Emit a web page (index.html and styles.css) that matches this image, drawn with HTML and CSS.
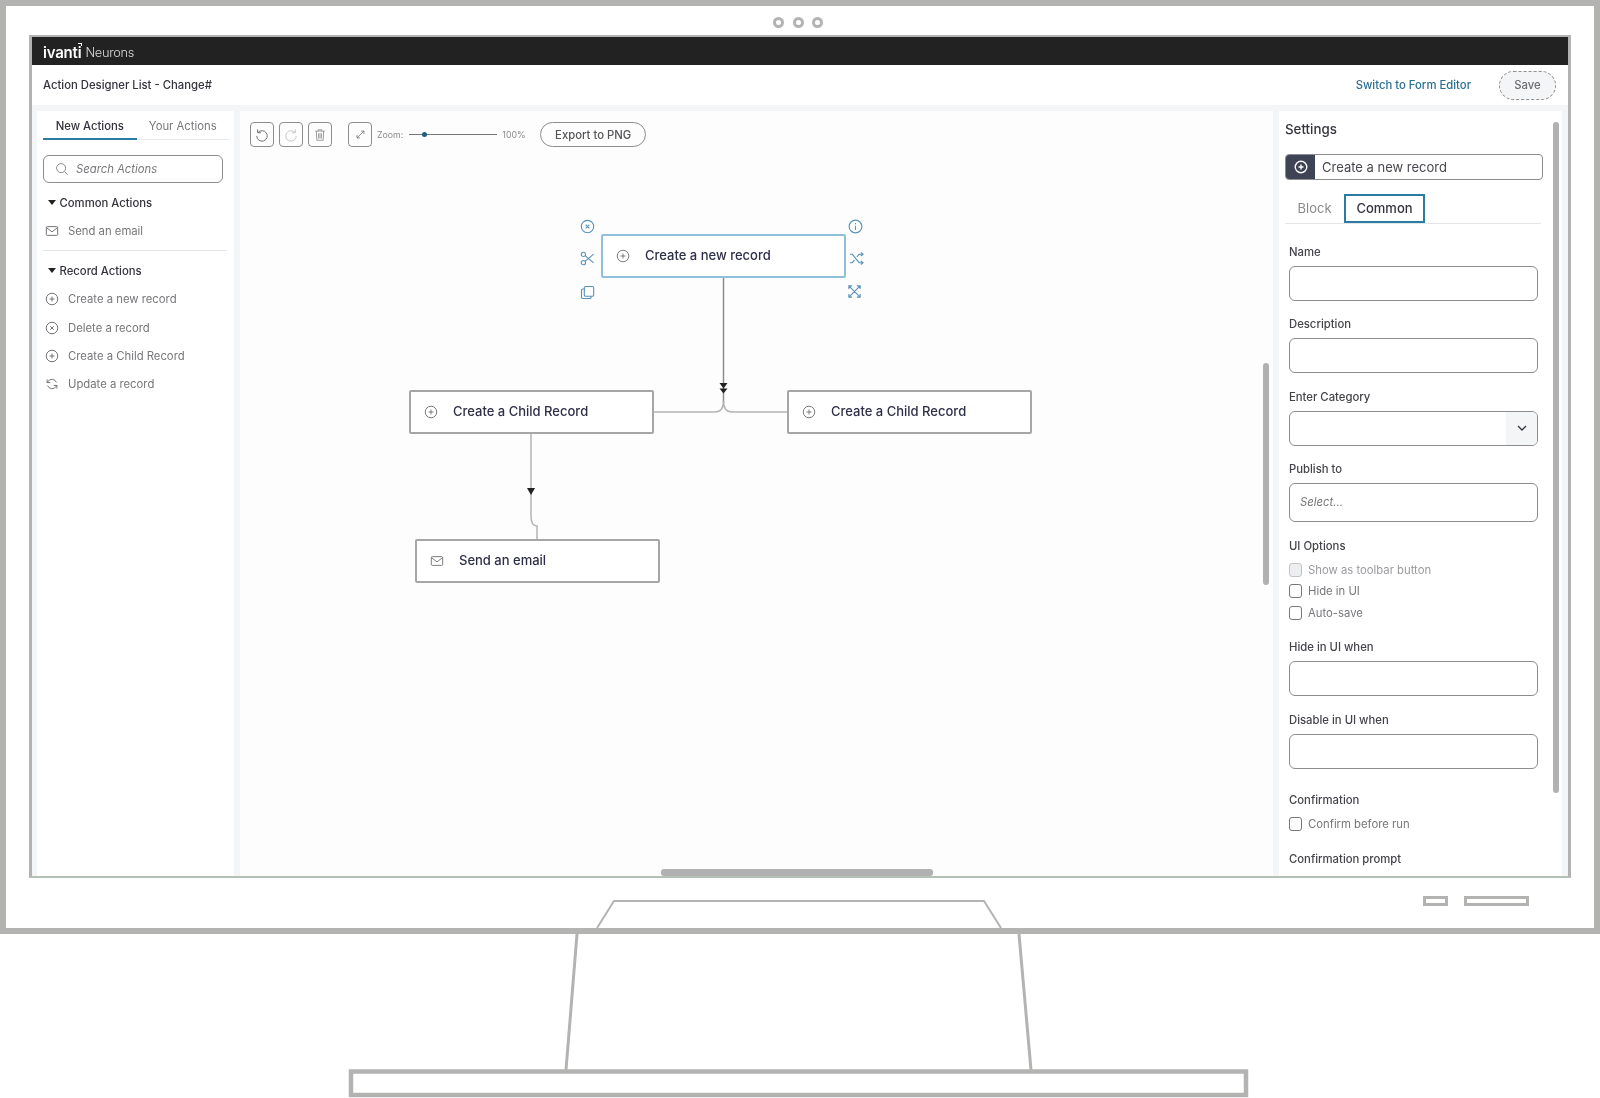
FILE: index.html
```html
<!DOCTYPE html>
<html lang="en">

<head>
    <meta charset="UTF-8">
    <title>Action Designer List - Change#</title>
    <link rel="stylesheet" href="styles.css">
</head>

<body>
    <svg class="icon-defs" width="0" height="0">
        <symbol id="i-plus" viewBox="0 0 16 16"><circle cx="8" cy="8" r="6.6"/><path d="M8 5.2v5.6M5.2 8h5.6"/></symbol>
        <symbol id="i-cross" viewBox="0 0 16 16"><circle cx="8" cy="8" r="6.6"/><path d="M6 6l4 4M10 6l-4 4"/></symbol>
        <symbol id="i-mail" viewBox="0 0 16 16"><rect x="1.5" y="3" width="13" height="10" rx="1.2"/><path d="M1.8 4.2L8 9l6.2-4.8"/></symbol>
        <symbol id="i-sync" viewBox="0 0 16 16"><path d="M13 6.2A5.4 5.4 0 0 0 3.6 4.8L2.4 6.4M3 9.8a5.4 5.4 0 0 0 9.4 1.4l1.2-1.6"/><path d="M2.4 2.8v3.6H6M13.6 13.2V9.6H10"/></symbol>
        <symbol id="i-search" viewBox="0 0 16 16"><circle cx="7" cy="7" r="5.2"/><path d="M11 11l3.6 3.6"/></symbol>
        <symbol id="i-undo" viewBox="0 0 16 16"><path d="M3.4 5.2A6 6 0 1 1 2 9"/><path d="M3 1.6v3.8h3.8"/></symbol>
        <symbol id="i-redo" viewBox="0 0 16 16"><path d="M12.6 5.2A6 6 0 1 0 14 9"/><path d="M13 1.6v3.8H9.2"/></symbol>
        <symbol id="i-trash" viewBox="0 0 16 16"><path d="M2.5 3.5h11M6 3.5V2h4v1.5M3.8 3.5l.6 10.5h7.2l.6-10.5M6.4 6v6M8 6v6M9.6 6v6"/></symbol>
        <symbol id="i-fit" viewBox="0 0 16 16"><path d="M3 13L13 3M8.8 3H13v4.2M7.2 13H3V8.8"/></symbol>
        <symbol id="i-scissors" viewBox="0 0 16 16"><circle cx="3.6" cy="3.6" r="2.3"/><circle cx="3.6" cy="12.4" r="2.3"/><path d="M5.4 5l9.1 7.6M5.4 11l9.1-7.6"/></symbol>
        <symbol id="i-copy" viewBox="0 0 16 16"><rect x="4.6" y="1.6" width="10" height="10.4" rx="1.4"/><path d="M4.6 4.2H3A1.4 1.4 0 0 0 1.6 5.6v7.4A1.4 1.4 0 0 0 3 14.4h7.4a1.4 1.4 0 0 0 1.4-1.4v-1"/></symbol>
        <symbol id="i-info" viewBox="0 0 16 16"><circle cx="8" cy="8" r="6.8"/><path d="M8 7.2v4.4M8 4.2v1.4"/></symbol>
        <symbol id="i-shuffle" viewBox="0 0 16 16"><path d="M1 3.5h2.6L10.8 12.5H14M1 12.5h2.6l2.2-2.8M8.4 6.2l2.4-2.7H14"/><path d="M12.6 1.6L15 3.5l-2.4 1.9M12.6 10.6l2.4 1.9-2.4 1.9"/></symbol>
        <symbol id="i-expand" viewBox="0 0 16 16"><path d="M2 2l12 12M14 2L2 14M2 5.4V2h3.4M10.6 2H14v3.4M14 10.6V14h-3.4M5.4 14H2v-3.4"/></symbol>
    </svg>

    <div class="monitor">
        <div class="camera-dots">
            <span class="dot"></span>
            <span class="dot"></span>
            <span class="dot"></span>
        </div>

        <div class="screen">
            <header class="topbar">
                <span class="logo">ivanti<span class="logo-mark"></span></span>
                <span class="logo-product">Neurons</span>
            </header>

            <div class="subbar">
                <div class="page-title">Action Designer List - Change#</div>
                <div class="subbar-actions">
                    <a class="switch-link">Switch to Form Editor</a>
                    <div class="save-button">Save</div>
                </div>
            </div>

            <div class="workspace">
                <aside class="actions-panel">
                    <div class="panel-tabs">
                        <div class="panel-tab active">New Actions</div>
                        <div class="panel-tab">Your Actions</div>
                    </div>
                    <div class="search-box">
                        <svg class="icon search-icon"><use href="#i-search"/></svg>
                        <span>Search Actions</span>
                    </div>

                    <div class="group-title"><span class="caret"></span>Common Actions</div>
                    <div class="action-item"><svg class="icon"><use href="#i-mail"/></svg>Send an email</div>
                    <div class="group-divider"></div>

                    <div class="group-title"><span class="caret"></span>Record Actions</div>
                    <div class="action-item"><svg class="icon"><use href="#i-plus"/></svg>Create a new record</div>
                    <div class="action-item"><svg class="icon"><use href="#i-cross"/></svg>Delete a record</div>
                    <div class="action-item"><svg class="icon"><use href="#i-plus"/></svg>Create a Child Record</div>
                    <div class="action-item"><svg class="icon"><use href="#i-sync"/></svg>Update a record</div>
                </aside>

                <main class="canvas">
                    <div class="toolbar">
                        <div class="tool-group">
                            <div class="tool-button"><svg class="icon"><use href="#i-undo"/></svg></div>
                            <div class="tool-button disabled"><svg class="icon"><use href="#i-redo"/></svg></div>
                            <div class="tool-button muted"><svg class="icon"><use href="#i-trash"/></svg></div>
                        </div>
                        <div class="tool-button fit-button"><svg class="icon"><use href="#i-fit"/></svg></div>
                        <span class="zoom-label">Zoom:</span>
                        <div class="zoom-slider"><span class="zoom-thumb"></span></div>
                        <span class="zoom-label">100%</span>
                        <div class="export-button">Export to PNG</div>
                    </div>

                    <svg class="connectors" width="1033" height="765">
                        <path class="line-dark" d="M483.5 166V292"/>
                        <path class="line" d="M413 301H475Q483.5 301 483.5 290M547 301H492Q483.5 301 483.5 290"/>
                        <path class="arrow" d="M479.5 272h8l-4 5.5 4 0-4 5-4-5 4 0z"/>
                        <path class="line" d="M291 322V405Q291 415 297 415V428"/>
                        <path class="arrow" d="M287 377h8l-4 7z"/>
                    </svg>

                    <div class="node node-start selected">
                        <svg class="icon"><use href="#i-plus"/></svg>
                        <span>Create a new record</span>
                    </div>
                    <div class="node node-left">
                        <svg class="icon"><use href="#i-plus"/></svg>
                        <span>Create a Child Record</span>
                    </div>
                    <div class="node node-right">
                        <svg class="icon"><use href="#i-plus"/></svg>
                        <span>Create a Child Record</span>
                    </div>
                    <div class="node node-mail">
                        <svg class="icon"><use href="#i-mail"/></svg>
                        <span>Send an email</span>
                    </div>

                    <svg class="handle h-close"><use href="#i-cross"/></svg>
                    <svg class="handle h-cut"><use href="#i-scissors"/></svg>
                    <svg class="handle h-copy"><use href="#i-copy"/></svg>
                    <svg class="handle h-info"><use href="#i-info"/></svg>
                    <svg class="handle h-shuffle"><use href="#i-shuffle"/></svg>
                    <svg class="handle h-expand"><use href="#i-expand"/></svg>

                    <span class="scroll-thumb canvas-scroll-y"></span>
                    <span class="scroll-thumb canvas-scroll-x"></span>
                </main>

                <aside class="settings-panel">
                    <div class="settings-title">Settings</div>
                    <div class="block-name">
                        <span class="block-icon"><svg class="icon"><use href="#i-plus"/></svg></span>
                        <span class="block-text">Create a new record</span>
                    </div>
                    <div class="settings-tabs">
                        <div class="settings-tab">Block</div>
                        <div class="settings-tab active">Common</div>
                    </div>

                    <div class="settings-form">
                        <div class="field">
                            <div class="field-label">Name</div>
                            <div class="input"></div>
                        </div>
                        <div class="field">
                            <div class="field-label">Description</div>
                            <div class="input"></div>
                        </div>
                        <div class="field">
                            <div class="field-label">Enter Category</div>
                            <div class="input select">
                                <span class="select-arrow">
                                    <svg width="12" height="12" viewBox="0 0 12 12"><path d="M2 4l4 4 4-4"/></svg>
                                </span>
                            </div>
                        </div>
                        <div class="field">
                            <div class="field-label">Publish to</div>
                            <div class="input tall">Select...</div>
                        </div>
                        <div class="field">
                            <div class="field-label">UI Options</div>
                            <div class="checks">
                                <div class="check disabled"><span class="box"></span>Show as toolbar button</div>
                                <div class="check"><span class="box"></span>Hide in UI</div>
                                <div class="check"><span class="box"></span>Auto-save</div>
                            </div>
                        </div>
                        <div class="field">
                            <div class="field-label">Hide in UI when</div>
                            <div class="input"></div>
                        </div>
                        <div class="field spaced">
                            <div class="field-label">Disable in UI when</div>
                            <div class="input"></div>
                        </div>
                        <div class="field">
                            <div class="field-label">Confirmation</div>
                            <div class="checks confirm">
                                <div class="check"><span class="box"></span>Confirm before run</div>
                            </div>
                        </div>
                        <div class="field">
                            <div class="field-label">Confirmation prompt</div>
                        </div>
                    </div>

                    <span class="scroll-thumb settings-scroll"></span>
                </aside>
            </div>
        </div>

        <div class="chin">
            <svg class="neck-top" width="414" height="50"><path d="M5 50L22 23H392L409 50"/></svg>
            <span class="chin-button small"></span>
            <span class="chin-button wide"></span>
        </div>
    </div>

    <svg class="stand" width="1600" height="164">
        <path d="M577 0L566 136M1019 0L1031 136"/>
        <rect x="351" y="137.5" width="895" height="23.5"/>
    </svg>
</body>

</html>
```

FILE: styles.css
```css
:root {
    --frame-color: #b3b4b2;
    --panel-bg: #f3f5f6;
    --input-border: #8d8d8f;
    --blue: #2a7ca3;
    --dark-text: #33333d;
    --gray-text: #77777b;
}

* {
    margin: 0;
    padding: 0;
    box-sizing: border-box;
    font-family: Inter, 'Liberation Sans', sans-serif;
}

body {
    width: 1600px;
    height: 1098px;
    background: white;
    overflow: hidden;
    font-size: 11.3px;
    color: var(--dark-text);
}

.icon-defs {
    position: absolute;
}

.icon {
    width: 14px;
    height: 14px;
    flex: none;
    fill: none;
    stroke: currentColor;
    stroke-width: 1.1;
}

/* monitor frame */
.monitor {
    width: 1600px;
    height: 934px;
    border: 6px solid var(--frame-color);
    filter: blur(0.35px);
}

.camera-dots {
    height: 29px;
    display: flex;
    justify-content: center;
    align-items: center;
    gap: 8.5px;
    padding-right: 4px;
    padding-top: 3px;
}

.dot {
    width: 11px;
    height: 11px;
    border: 3px solid var(--frame-color);
    border-radius: 50%;
}

.screen {
    margin: 0 23px;
    height: 843px;
    display: flex;
    flex-direction: column;
    border: 3px solid var(--frame-color);
    border-top-width: 2px;
    border-bottom: 2px solid #b4bfb6;
}

.chin {
    position: relative;
    height: 50px;
    display: flex;
    justify-content: flex-end;
    gap: 16px;
    padding: 18px 65px 0 0;
}

.chin-button {
    height: 10px;
    border: 3px solid var(--frame-color);
}

.chin-button.small {
    width: 25px;
}

.chin-button.wide {
    width: 65px;
}

.neck-top {
    position: absolute;
    left: 586px;
    top: 0;
    fill: none;
    stroke: var(--frame-color);
    stroke-width: 2;
}

.stand {
    display: block;
    fill: none;
    stroke: var(--frame-color);
    stroke-width: 3;
    filter: blur(0.35px);
}

.stand rect {
    stroke-width: 4.5;
}

/* top bars */
.topbar {
    height: 28px;
    flex: none;
    display: flex;
    align-items: center;
    background: #222222;
    color: white;
    padding: 2px 0 0 11px;
}

.logo {
    position: relative;
    font-size: 15px;
    font-weight: 600;
    letter-spacing: -0.2px;
}

.logo-mark {
    position: absolute;
    right: -1px;
    top: 0;
    width: 4px;
    height: 3px;
    border-top: 1px solid white;
    border-right: 1px solid white;
}

.logo-product {
    margin-left: 4px;
    font-size: 12.8px;
    font-weight: 300;
    letter-spacing: -0.3px;
    color: #d8d8d8;
}

.subbar {
    height: 40px;
    flex: none;
    display: flex;
    justify-content: space-between;
    align-items: center;
    background: white;
    padding: 0 12px 0 11px;
}

.page-title {
    font-weight: 500;
    margin-top: -1px;
}

.subbar-actions {
    display: flex;
    align-items: center;
    gap: 28px;
}

.switch-link {
    color: #2a6f92;
    font-weight: 500;
}

.save-button {
    width: 57px;
    height: 29px;
    display: flex;
    justify-content: center;
    align-items: center;
    border: 1px dashed #8f8f8f;
    border-radius: 15px;
    background: var(--panel-bg);
    color: #6b6b70;
    font-weight: 500;
}

.workspace {
    flex: 1;
    min-height: 0;
    display: flex;
    gap: 6px;
    padding: 6px 6px 0 5px;
    background: var(--panel-bg);
}

/* left panel */
.actions-panel {
    width: 197px;
    flex: none;
    background: white;
    padding: 0 6px;
}

.panel-tabs {
    display: flex;
    width: 186px;
    height: 29px;
    border-bottom: 1px solid #e6e8ea;
}

.panel-tab {
    width: 93px;
    padding-top: 7px;
    line-height: 16px;
    text-align: center;
    color: var(--gray-text);
}

.panel-tab.active {
    width: 94px;
    height: 29px;
    border-bottom: 2px solid var(--blue);
    color: var(--dark-text);
    font-weight: 500;
}

.search-box {
    width: 180px;
    height: 28px;
    margin-top: 15px;
    display: flex;
    align-items: center;
    gap: 7px;
    padding-left: 11px;
    border: 1px solid var(--input-border);
    border-radius: 6px;
    font-style: italic;
    color: var(--gray-text);
}

.search-icon {
    width: 14px;
    height: 14px;
    color: #888888;
}

.group-title {
    height: 29px;
    display: flex;
    align-items: center;
    margin-top: 5px;
    padding-left: 5px;
    font-weight: 500;
}

.caret {
    width: 0;
    height: 0;
    margin-right: 3.5px;
    border-left: 4px solid transparent;
    border-right: 4px solid transparent;
    border-top: 5px solid #222222;
}

.action-item {
    height: 28.3px;
    display: flex;
    align-items: center;
    gap: 9px;
    padding-left: 2px;
    color: var(--gray-text);
}

.action-item .icon {
    width: 14px;
    height: 14px;
    color: #6f6f73;
}

.group-divider {
    width: 184px;
    height: 1px;
    margin-top: 5px;
    background: #e3e5e7;
}

/* canvas */
.canvas {
    position: relative;
    flex: 1;
    min-width: 0;
    overflow: hidden;
    background: #fdfdfd;
}

.toolbar {
    display: flex;
    align-items: center;
    height: 25px;
    margin: 11px 0 0 10px;
}

.tool-group {
    display: flex;
    gap: 5px;
    margin-right: 16px;
}

.tool-button {
    width: 24px;
    height: 25px;
    display: flex;
    justify-content: center;
    align-items: center;
    border: 1px solid var(--input-border);
    border-radius: 4px;
    color: #6d6d70;
}

.tool-button.disabled {
    color: #c6c6c6;
}

.tool-button.muted {
    color: #9a9a9a;
}

.fit-button .icon {
    width: 11px;
    height: 11px;
}

.zoom-label {
    margin-left: 5px;
    font-size: 8.8px;
    color: #8a8a8e;
}

.zoom-slider {
    position: relative;
    width: 88px;
    height: 1px;
    margin-left: 6px;
    background: #777777;
}

.zoom-thumb {
    position: absolute;
    left: 13px;
    top: -2px;
    width: 5px;
    height: 5px;
    border-radius: 50%;
    background: #1f5c80;
}

.export-button {
    width: 106px;
    height: 25px;
    margin-left: 14.5px;
    display: flex;
    justify-content: center;
    align-items: center;
    border: 1px solid var(--input-border);
    border-radius: 13px;
    color: #55555a;
    font-weight: 500;
}

.connectors {
    position: absolute;
    left: 0;
    top: 0;
    fill: none;
}

.line {
    stroke: #b4b4b4;
    stroke-width: 1.5;
}

.line-dark {
    stroke: #8c8c8c;
    stroke-width: 1.5;
}

.arrow {
    fill: #222222;
}

.node {
    position: absolute;
    width: 245px;
    height: 44px;
    display: flex;
    align-items: center;
    gap: 15px;
    padding-left: 13px;
    background: white;
    border: 2px solid #a6a6a8;
    border-radius: 2px;
    font-size: 13px;
    font-weight: 500;
    color: #2e2e48;
}

.node span {
    margin-top: -2px;
}

.node .icon {
    color: #77777b;
}

.node.selected {
    border-color: #8fc0d8;
}

.node-start {
    left: 361px;
    top: 123px;
}

.node-left {
    left: 169px;
    top: 279px;
}

.node-right {
    left: 547px;
    top: 279px;
}

.node-mail {
    left: 175px;
    top: 428px;
}

.handle {
    position: absolute;
    width: 15px;
    height: 15px;
    fill: none;
    stroke: #5b93b5;
    stroke-width: 1.2;
}

.h-close {
    left: 340px;
    top: 108px;
}

.h-cut {
    left: 340px;
    top: 140px;
}

.h-copy {
    left: 340px;
    top: 174px;
}

.h-info {
    left: 608px;
    top: 108px;
}

.h-shuffle {
    left: 609px;
    top: 140px;
}

.h-expand {
    left: 607px;
    top: 173px;
}

.scroll-thumb {
    position: absolute;
    background: #b0b1b0;
    border-radius: 3px;
}

.canvas-scroll-y {
    left: 1023px;
    top: 252px;
    width: 6px;
    height: 222px;
}

.canvas-scroll-x {
    left: 421px;
    bottom: 0;
    width: 272px;
    height: 7px;
}

/* settings panel */
.settings-panel {
    position: relative;
    width: 283px;
    flex: none;
    overflow: hidden;
    background: white;
    padding: 8px 0 0 6px;
}

.settings-scroll {
    left: 274px;
    top: 11px;
    width: 6px;
    height: 671px;
}

.settings-title {
    height: 20px;
    line-height: 20px;
    font-size: 13.3px;
    font-weight: 500;
}

.block-name {
    width: 258px;
    height: 26px;
    margin-top: 15px;
    display: flex;
    align-items: center;
    border: 1px solid var(--input-border);
    border-radius: 4px;
    overflow: hidden;
    font-size: 13px;
    color: #48484e;
}

.block-text {
    margin-top: -1px;
}

.block-icon {
    width: 29px;
    height: 100%;
    margin-right: 7px;
    display: flex;
    justify-content: center;
    align-items: center;
    background: #3e4455;
    color: white;
}

.block-icon .icon {
    stroke-width: 1.6;
}

.settings-tabs {
    width: 256px;
    height: 30px;
    margin-top: 14px;
    display: flex;
    border-bottom: 1px solid #e3e5e7;
    font-size: 13px;
}

.settings-tab {
    display: flex;
    align-items: center;
    height: 29px;
    padding: 0 12.5px 1px;
    color: #8b8b8f;
}

.settings-tab.active {
    width: 81px;
    justify-content: center;
    padding: 0 0 1px;
    border: 2px solid var(--blue);
    color: var(--dark-text);
    font-weight: 500;
}

.settings-form {
    width: 258px;
    padding: 19px 5px 0 4px;
}

.field {
    margin-bottom: 14.7px;
}

.field.spaced {
    margin-bottom: 22px;
}

.field-label {
    height: 16px;
    line-height: 18px;
    margin-bottom: 6.8px;
    font-weight: 500;
    color: #44444a;
}

.input {
    position: relative;
    height: 35px;
    border: 1px solid var(--input-border);
    border-radius: 6px;
    background: white;
}

.input.tall {
    height: 39px;
    line-height: 37px;
    padding-left: 10px;
    font-style: italic;
    color: var(--gray-text);
}

.select {
    overflow: hidden;
}

.select-arrow {
    position: absolute;
    right: 0;
    top: 0;
    width: 31px;
    height: 100%;
    display: flex;
    justify-content: center;
    align-items: center;
    background: var(--panel-bg);
}

.select-arrow svg {
    fill: none;
    stroke: #33333d;
    stroke-width: 1.3;
}

.checks {
    margin-top: -0.5px;
}

.checks.confirm {
    margin-top: 2.5px;
}

.check {
    height: 21.5px;
    display: flex;
    align-items: center;
    gap: 6px;
    color: var(--gray-text);
}

.box {
    width: 13px;
    height: 14px;
    border: 1px solid #77777b;
    border-radius: 3px;
    background: white;
}

.check.disabled {
    color: #9a9a9e;
}

.check.disabled .box {
    border-color: #c4c4c6;
    background: #eceef0;
}
```
